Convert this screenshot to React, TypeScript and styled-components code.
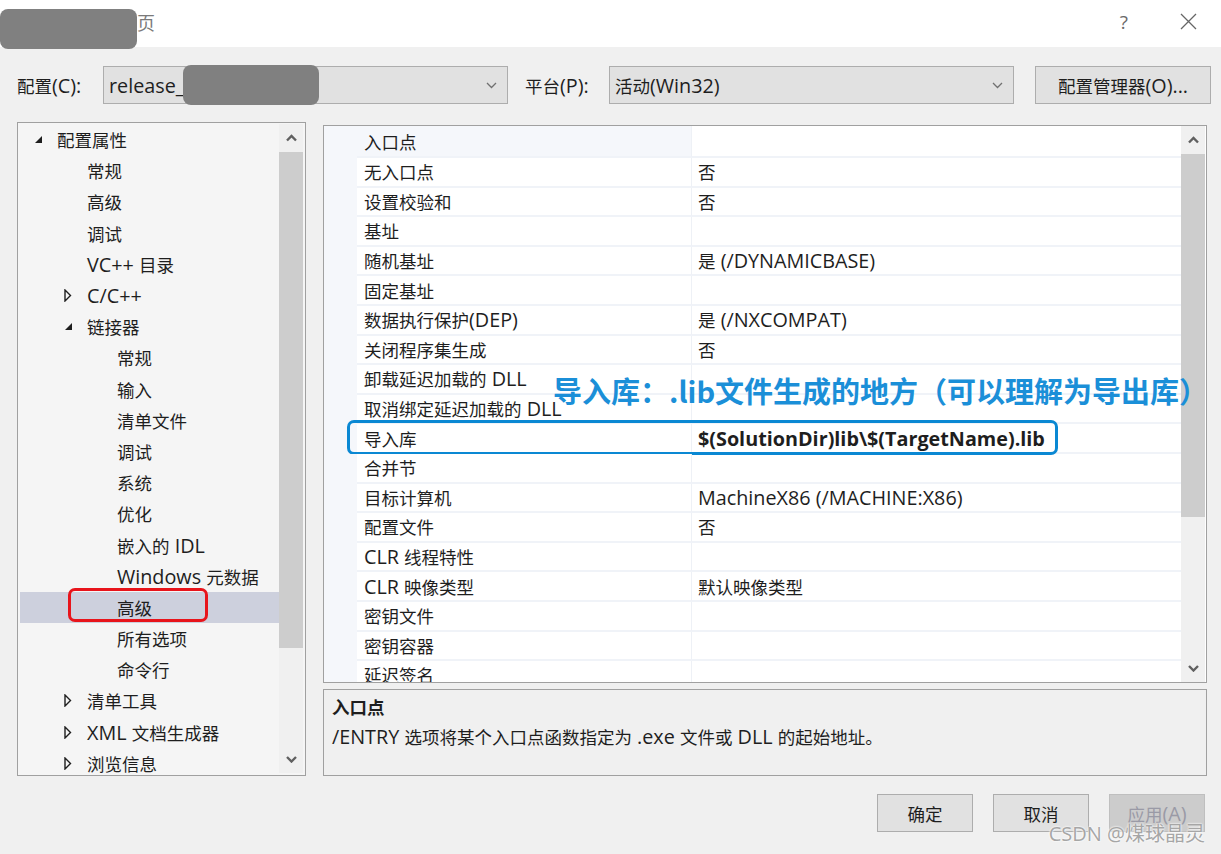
import React from 'react';
import styled, { createGlobalStyle } from 'styled-components';

const GlobalStyle = createGlobalStyle`
  html, body {
    margin: 0;
    padding: 0;
    background: #f0f0f0;
  }
  body {
    font-family: "Open Sans", "Noto Sans CJK SC", sans-serif;
    color: #1e1e1e;
  }
`;

const Dialog = styled.div`
  width: 1221px;
  height: 854px;
  background: #f0f0f0;
  display: flex;
  flex-direction: column;
  position: relative;
  overflow: hidden;
  font-size: 17.5px;
`;

// latin runs are set a bit larger, as in the YaHei UI face of the original
const Latin = styled.span`
  font-size: 1.13em;
`;

const Mixed = ({ text }: { text: string }) => (
  <>
    {text.split(/([\u0020-\u007e]+)/).map((part, i) =>
      /^[\u0020-\u007e]+$/.test(part) ? <Latin key={i}>{part}</Latin> : part
    )}
  </>
);

const TitleBar = styled.div`
  height: 47px;
  flex-shrink: 0;
  box-sizing: border-box;
  background: #fff;
  display: flex;
  align-items: center;
  position: relative;
  padding: 0 0 4px 137px;
`;

const TitleText = styled.span`
  color: #7a7a7a;
  font-size: 18px;
`;

const TitleButtons = styled.div`
  margin-left: auto;
  display: flex;
  align-items: center;
  gap: 52px;
  padding-right: 24px;
  color: #6a6a6a;
  font-size: 19px;
`;

// grey blur boxes that hide parts of the original screenshot
const Redaction = styled.div<{ $left: number; $top: number; $w: number; $h: number }>`
  position: absolute;
  left: ${p => p.$left}px;
  top: ${p => p.$top}px;
  width: ${p => p.$w}px;
  height: ${p => p.$h}px;
  background: #808080;
  border-radius: 8px;
  z-index: 3;
`;

const ConfigRow = styled.div`
  display: flex;
  align-items: center;
  height: 38px;
  margin-top: 19px;
  padding-left: 17px;
  position: relative;
`;

const Label = styled.span<{ $w: number }>`
  width: ${p => p.$w}px;
  flex-shrink: 0;
  white-space: nowrap;
`;

const Combo = styled.div`
  width: 405px;
  height: 38px;
  box-sizing: border-box;
  border: 1px solid #adadad;
  background: #e1e1e1;
  display: flex;
  align-items: center;
  padding: 0 10px 0 5px;
  margin-right: 17px;
`;

const ComboText = styled.span`
  flex: 1;
`;

const Button = styled.button<{ $w?: number; $disabled?: boolean }>`
  width: ${p => p.$w ?? 96}px;
  height: 38px;
  box-sizing: border-box;
  border: 1px solid ${p => (p.$disabled ? '#bfbfbf' : '#adadad')};
  background: ${p => (p.$disabled ? '#cccccc' : '#e1e1e1')};
  color: ${p => (p.$disabled ? '#9a9aa6' : '#1e1e1e')};
  font-family: inherit;
  font-size: 17.5px;
  padding: 0;
  white-space: nowrap;
`;

const Main = styled.div`
  display: flex;
  gap: 17px;
  padding-left: 17px;
  margin-top: 18px;
  height: 654px;
`;

const TreePanel = styled.div`
  width: 289px;
  height: 654px;
  box-sizing: border-box;
  border: 1px solid #a0a0a0;
  background: #f5f5f5;
  display: flex;
  padding: 1px 2px 2px 2px;
`;

const TreeList = styled.div`
  flex: 1;
  overflow: hidden;
`;

const TreeRow = styled.div<{ $level: number; $selected?: boolean }>`
  height: 31.2px;
  display: flex;
  align-items: center;
  padding-left: ${p => 14 + p.$level * 30}px;
  background: ${p => (p.$selected ? '#cdd0dd' : 'transparent')};
  position: relative;
  white-space: nowrap;
`;

const Expander = styled.span`
  width: 23px;
  flex-shrink: 0;
  display: flex;
  align-items: center;
`;

const RedMark = styled.div`
  position: absolute;
  left: 48px;
  top: -4px;
  width: 140px;
  height: 34px;
  box-sizing: border-box;
  border: 3px solid #e8141b;
  border-radius: 7px;
`;

const ScrollBar = styled.div`
  width: 24px;
  flex-shrink: 0;
  display: flex;
  flex-direction: column;
  background: #f0f0f0;
`;

const ScrollArrow = styled.div`
  height: 28px;
  display: flex;
  align-items: center;
  justify-content: center;
  flex-shrink: 0;
`;

const Track = styled.div`
  flex: 1;
`;

const Thumb = styled.div<{ $h: number }>`
  height: ${p => p.$h}px;
  background: #cdcdcd;
`;

const RightCol = styled.div`
  width: 884px;
  margin-top: 3px;
  display: flex;
  flex-direction: column;
`;

const GridPanel = styled.div`
  height: 558px;
  box-sizing: border-box;
  border: 1px solid #a0a0a0;
  background: #fff;
  display: flex;
  padding-right: 1px;
  position: relative;
`;

const GridList = styled.div`
  width: 857px;
  overflow: hidden;
`;

const GridRow = styled.div<{ $header?: boolean }>`
  display: flex;
  height: ${p => (p.$header ? 32 : 29.6)}px;
  position: relative;
`;

const Gutter = styled.div`
  width: 33px;
  flex-shrink: 0;
  background: #f5f7fb;
`;

const NameCell = styled.div<{ $header?: boolean }>`
  width: 335px;
  flex-shrink: 0;
  box-sizing: border-box;
  padding-left: 7px;
  display: flex;
  align-items: center;
  white-space: nowrap;
  background: ${p => (p.$header ? '#f5f7fb' : '#fff')};
  border-bottom: 2px solid #f0f3f8;
  border-right: 1px solid #eef1f6;
`;

const ValueCell = styled.div<{ $bold?: boolean }>`
  flex: 1;
  box-sizing: border-box;
  padding-left: 6px;
  display: flex;
  align-items: center;
  white-space: nowrap;
  font-weight: ${p => (p.$bold ? 700 : 400)};
  border-bottom: 2px solid #f0f3f8;
`;

const CellText = styled.span`
  white-space: nowrap;
`;

const BlueMark = styled.div`
  position: absolute;
  left: 23px;
  top: -4px;
  width: 711px;
  height: 35px;
  box-sizing: border-box;
  border: 3.5px solid #0a88d3;
  border-radius: 7px;
`;

const Annotation = styled.div`
  position: absolute;
  left: 229px;
  top: 244px;
  line-height: 40px;
  font-family: "Noto Sans CJK SC", sans-serif;
  font-size: 29px;
  font-weight: 700;
  color: #1b8fd8;
  white-space: nowrap;
  z-index: 2;
`;

const DescPanel = styled.div`
  margin-top: 6px;
  height: 92px;
  box-sizing: border-box;
  border: 1px solid #a0a0a0;
  background: #f0f0f0;
  padding: 3px 8px;
  line-height: 29px;
`;

const DescTitle = styled.div`
  font-weight: 700;
`;

const Footer = styled.div`
  display: flex;
  justify-content: flex-end;
  gap: 20px;
  margin-top: 18px;
  padding-right: 16px;
  position: relative;
`;

const Watermark = styled.div`
  position: absolute;
  right: 16px;
  top: 27px;
  font-size: 20px;
  line-height: 26px;
  color: #a6a6a6;
  text-shadow: 0 0 2px #fff, 0 0 2px #fff;
  white-space: nowrap;
`;

const Chevron = ({ dir = 'down', thin = false }: { dir?: 'up' | 'down'; thin?: boolean }) => (
  <svg width="11" height="8" viewBox="0 0 11 8">
    <path
      d={dir === 'down' ? 'M1 2 L5.5 6.5 L10 2' : 'M1 6.5 L5.5 2 L10 6.5'}
      fill="none"
      stroke={thin ? '#707070' : '#606060'}
      strokeWidth={thin ? 1.3 : 2.4}
    />
  </svg>
);

const Arrow = ({ open }: { open: boolean }) =>
  open ? (
    <svg width="9" height="9" viewBox="0 0 9 9">
      <polygon points="8,1 8,8 1,8" fill="#1e1e1e" />
    </svg>
  ) : (
    <svg width="8" height="13" viewBox="0 0 8 13">
      <polygon points="1,1 6.5,6.5 1,12" fill="none" stroke="#1e1e1e" strokeWidth="1.4" />
    </svg>
  );

type TreeItem = { level: number; text: string; exp?: 'open' | 'closed'; selected?: boolean };

const tree: TreeItem[] = [
  { level: 0, text: '配置属性', exp: 'open' },
  { level: 1, text: '常规' },
  { level: 1, text: '高级' },
  { level: 1, text: '调试' },
  { level: 1, text: 'VC++ 目录' },
  { level: 1, text: 'C/C++', exp: 'closed' },
  { level: 1, text: '链接器', exp: 'open' },
  { level: 2, text: '常规' },
  { level: 2, text: '输入' },
  { level: 2, text: '清单文件' },
  { level: 2, text: '调试' },
  { level: 2, text: '系统' },
  { level: 2, text: '优化' },
  { level: 2, text: '嵌入的 IDL' },
  { level: 2, text: 'Windows 元数据' },
  { level: 2, text: '高级', selected: true },
  { level: 2, text: '所有选项' },
  { level: 2, text: '命令行' },
  { level: 1, text: '清单工具', exp: 'closed' },
  { level: 1, text: 'XML 文档生成器', exp: 'closed' },
  { level: 1, text: '浏览信息', exp: 'closed' },
];

const props: [string, string, boolean?][] = [
  ['无入口点', '否'],
  ['设置校验和', '否'],
  ['基址', ''],
  ['随机基址', '是 (/DYNAMICBASE)'],
  ['固定基址', ''],
  ['数据执行保护(DEP)', '是 (/NXCOMPAT)'],
  ['关闭程序集生成', '否'],
  ['卸载延迟加载的 DLL', ''],
  ['取消绑定延迟加载的 DLL', ''],
  ['导入库', '$(SolutionDir)lib\\$(TargetName).lib', true],
  ['合并节', ''],
  ['目标计算机', 'MachineX86 (/MACHINE:X86)'],
  ['配置文件', '否'],
  ['CLR 线程特性', ''],
  ['CLR 映像类型', '默认映像类型'],
  ['密钥文件', ''],
  ['密钥容器', ''],
  ['延迟签名', ''],
];

export default function App() {
  return (
    <Dialog>
      <GlobalStyle />
      <TitleBar>
        <Redaction $left={0} $top={9} $w={137} $h={40} />
        <TitleText>页</TitleText>
        <TitleButtons>
          <span>?</span>
          <svg width="17" height="17" viewBox="0 0 17 17">
            <path d="M1 1 L16 16 M16 1 L1 16" stroke="#666" strokeWidth="1.3" />
          </svg>
        </TitleButtons>
      </TitleBar>

      <ConfigRow>
        <Label $w={86}>
          <Mixed text="配置(C):" />
        </Label>
        <Combo>
          <ComboText>
            <Mixed text="release_" />
          </ComboText>
          <Chevron thin />
        </Combo>
        <Redaction $left={183} $top={-1} $w={136} $h={40} />
        <Label $w={84}>
          <Mixed text="平台(P):" />
        </Label>
        <Combo>
          <ComboText>
            <Mixed text="活动(Win32)" />
          </ComboText>
          <Chevron thin />
        </Combo>
        <Button $w={176} style={{ marginLeft: 4 }}>
          <Mixed text="配置管理器(O)..." />
        </Button>
      </ConfigRow>

      <Main>
        <TreePanel>
          <TreeList>
            {tree.map((t, i) => (
              <TreeRow key={i} $level={t.level} $selected={t.selected}>
                <Expander>{t.exp && <Arrow open={t.exp === 'open'} />}</Expander>
                <CellText>
                  <Mixed text={t.text} />
                </CellText>
                {t.selected && <RedMark />}
              </TreeRow>
            ))}
          </TreeList>
          <ScrollBar>
            <ScrollArrow>
              <Chevron dir="up" />
            </ScrollArrow>
            <Track>
              <Thumb $h={496} />
            </Track>
            <ScrollArrow>
              <Chevron />
            </ScrollArrow>
          </ScrollBar>
        </TreePanel>

        <RightCol>
          <GridPanel>
            <GridList>
              <GridRow $header>
                <Gutter />
                <NameCell $header>入口点</NameCell>
                <ValueCell />
              </GridRow>
              {props.map(([name, value, bold], i) => (
                <GridRow key={i}>
                  <Gutter />
                  <NameCell>
                    <CellText>
                      <Mixed text={name} />
                    </CellText>
                  </NameCell>
                  <ValueCell $bold={bold}>
                    <CellText>
                      <Mixed text={value} />
                    </CellText>
                  </ValueCell>
                  {bold && <BlueMark />}
                </GridRow>
              ))}
            </GridList>
            <ScrollBar>
              <ScrollArrow>
                <Chevron dir="up" />
              </ScrollArrow>
              <Track>
                <Thumb $h={363} />
              </Track>
              <ScrollArrow>
                <Chevron />
              </ScrollArrow>
            </ScrollBar>
            <Annotation>导入库：.lib文件生成的地方（可以理解为导出库）</Annotation>
          </GridPanel>
          <DescPanel>
            <DescTitle>入口点</DescTitle>
            <div>
              <Mixed text="/ENTRY 选项将某个入口点函数指定为 .exe 文件或 DLL 的起始地址。" />
            </div>
          </DescPanel>
        </RightCol>
      </Main>

      <Footer>
        <Button>确定</Button>
        <Button>取消</Button>
        <Button $disabled>
          <Mixed text="应用(A)" />
        </Button>
        <Watermark>CSDN @煤球晶灵</Watermark>
      </Footer>
    </Dialog>
  );
}
